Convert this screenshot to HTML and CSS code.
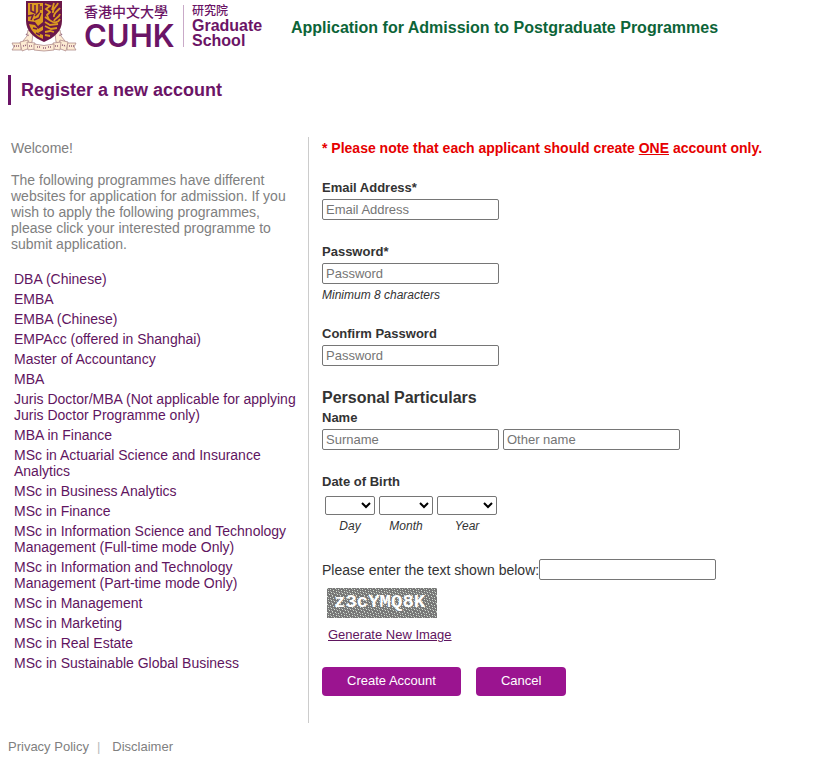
FILE: index.html
```html
<!DOCTYPE html>
<html lang="en">
<head>
<meta charset="utf-8">
<title>Application for Admission to Postgraduate Programmes</title>
<link rel="stylesheet" href="styles.css">
</head>
<body>
<header class="masthead">
  <div class="logo">
    <svg class="crest" viewBox="0 0 66 53" role="img" aria-label="University crest">
      <g fill="#fdebd3" stroke="#b08d8b" stroke-width="0.800">
        <path d="M17 30l5 3-1 9-5 2-4-3 4-5z"/>
        <path d="M49 30l-5 3 1 9 5 2 4-3-4-5z"/>
        <path d="M1 43h9v7H1l2-3z"/>
        <path d="M65 43h-9v7h9l-2-3z"/>
        <path d="M9 42l8-2 2 8-8 3z"/>
        <path d="M57 42l-8-2-2 8 8 3z"/>
        <path d="M16 42l8 1v6l-7 1z"/>
        <path d="M50 42l-8 1v6l7 1z"/>
        <path d="M23 44q10 3 20 0v6q-10 2-20 0z"/>
      </g>
      <path d="M15 34l3 2M51 34l-3 2M3 46h5M12 46l4-1M18 46h4M26 47h4M32 48h3M37 47h4M44 46h4M51 45l4 1M58 46h5" fill="none" stroke="#92617a" stroke-width="1.500" stroke-dasharray="1 1"/>
      <path d="M15 1h36v20c0 10-8 17-18 21C23 38 15 31 15 21z" fill="#6b1748"/>
      <path d="M17 3h15v19l-5 4-3-4-7-1z" fill="#dc9b20"/>
      <path d="M18 24l6 1 3 4 5-3v4l-5 3 5 2v4c-7-3-12-8-14-15z" fill="#dc9b20"/>
      <g fill="none" stroke="#6b1748" stroke-width="1.500">
        <path d="M20 4v7l4 2V5M28 4v8l-4 4M17 16l5-1-2 5M30 13l-2 5-5 2M30 6v4M22 28l4 1M25 33l4 2"/>
      </g>
      <g fill="none" stroke="#dc9b20" stroke-width="1.800">
        <path d="M34 4l5 2-4 3 4 3-3 3 2 5"/>
        <path d="M43 3l-2 7M47 3c-1 4-6 5-5 10M49 8c-2 3-7 5-6 9M49 14c-1 4-5 4-6 7M49 19c-2 4-6 4-9 2l-6-4"/>
        <path d="M34 22l5 3 8-1M46 28l-6 1-6-3M43 32l-4-1-5 1M39 36l-5-1"/>
      </g>
    </svg>
    <div class="university">
      <span class="university-zh" lang="zh-Hant">香港中文大學</span>
      <span class="university-en">CUHK</span>
    </div>
    <div class="school">
      <span class="school-zh" lang="zh-Hant">研究院</span>
      <span class="school-en">Graduate<br>School</span>
    </div>
  </div>
  <p class="site-title">Application for Admission to Postgraduate Programmes</p>
</header>

<h1 class="page-title">Register a new account</h1>

<main class="columns">
  <aside class="intro">
    <p>Welcome!</p>
    <p>The following programmes have different websites for application for admission. If you wish to apply the following programmes, please click your interested programme to submit application.</p>
    <ul class="programmes">
      <li><a href="#">DBA (Chinese)</a></li>
      <li><a href="#">EMBA</a></li>
      <li><a href="#">EMBA (Chinese)</a></li>
      <li><a href="#">EMPAcc (offered in Shanghai)</a></li>
      <li><a href="#">Master of Accountancy</a></li>
      <li><a href="#">MBA</a></li>
      <li><a href="#">Juris Doctor/MBA (Not applicable for applying Juris Doctor Programme only)</a></li>
      <li><a href="#">MBA in Finance</a></li>
      <li><a href="#">MSc in Actuarial Science and Insurance Analytics</a></li>
      <li><a href="#">MSc in Business Analytics</a></li>
      <li><a href="#">MSc in Finance</a></li>
      <li><a href="#">MSc in Information Science and Technology Management (Full-time mode Only)</a></li>
      <li><a href="#">MSc in Information and Technology Management (Part-time mode Only)</a></li>
      <li><a href="#">MSc in Management</a></li>
      <li><a href="#">MSc in Marketing</a></li>
      <li><a href="#">MSc in Real Estate</a></li>
      <li><a href="#">MSc in Sustainable Global Business</a></li>
    </ul>
  </aside>

  <form class="register">
    <p class="notice">* Please note that each applicant should create <u>ONE</u> account only.</p>

    <div class="field">
      <label for="email">Email Address*</label>
      <input id="email" type="email" placeholder="Email Address">
    </div>
    <div class="field">
      <label for="password">Password*</label>
      <input id="password" type="password" placeholder="Password">
      <small class="hint">Minimum 8 characters</small>
    </div>
    <div class="field">
      <label for="confirm">Confirm Password</label>
      <input id="confirm" type="password" placeholder="Password">
    </div>

    <h2 class="section-title">Personal Particulars</h2>
    <div class="field">
      <label for="surname">Name</label>
      <div class="names">
        <input id="surname" type="text" placeholder="Surname">
        <input type="text" placeholder="Other name" aria-label="Other name">
      </div>
    </div>

    <fieldset class="birth">
      <legend>Date of Birth</legend>
      <div class="dates">
        <div class="date"><select id="day" class="short"><option></option></select><label for="day">Day</label></div>
        <div class="date"><select id="month"><option></option></select><label for="month">Month</label></div>
        <div class="date"><select id="year" class="long"><option></option></select><label for="year">Year</label></div>
      </div>
    </fieldset>

    <div class="captcha">
      <label for="captcha">Please enter the text shown below:</label><input id="captcha" type="text">
    </div>
    <svg class="captcha-image" viewBox="0 0 110 30">
      <defs>
        <pattern id="grain" width="8" height="8" patternUnits="userSpaceOnUse">
          <rect width="8" height="8" fill="#777"/>
          <path d="M0 0h1v1h-1zM3 1h1v1h-1zM6 2h1v1h-1zM1 3h1v1h-1zM4 4h1v1h-1zM7 5h1v1h-1zM2 6h1v1h-1zM5 7h1v1h-1z" fill="#d5e2d5"/>
          <path d="M5 0h1v1h-1zM1 1h1v1h-1zM3 3h1v1h-1zM6 4h1v1h-1zM1 5h1v1h-1zM4 6h1v1h-1z" fill="#aaa"/>
        </pattern>
      </defs>
      <rect width="110" height="30" fill="url(#grain)"/>
      <text x="7" y="19">z3cYMQ8K</text>
    </svg>
    <a class="regenerate" href="#">Generate New Image</a>

    <div class="actions">
      <button type="submit">Create Account</button>
      <button type="button">Cancel</button>
    </div>
  </form>
</main>

<footer class="footer">
  <a href="#">Privacy Policy</a><span class="bar">|</span><a href="#">Disclaimer</a>
</footer>
</body>
</html>
```
FILE: styles.css
```css
* { box-sizing: border-box; }

body {
  margin: 0 8px;
  background: #fff;
  color: #333;
  font: 14px/16px "Liberation Sans", Arial, sans-serif;
}

p, h1, h2, ul { margin: 0; padding: 0; }
a { color: #5f155f; text-decoration: none; }

.masthead { display: flex; align-items: flex-start; }
.logo { display: flex; width: 283px; height: 55px; padding-left: 3px; color: #6b1466; }
.crest { width: 66px; height: 53px; }

.university {
  display: flex;
  flex-direction: column;
  width: 107px;
  height: 42px;
  margin-top: 5px;
  padding-left: 7px;
  border-right: 1px solid #c9aac8;
}
.university-zh { font: 500 14px/14px "Liberation Sans", "Noto Sans CJK TC", sans-serif; }
.university-en { font: 600 31px/34px "Inter", sans-serif; }

.school { display: flex; flex-direction: column; padding: 4px 0 0 8px; }
.school-zh { font: 500 12px/14px "Liberation Sans", "Noto Sans CJK TC", sans-serif; }
.school-en { font: bold 16px/15px "Liberation Sans", Arial, sans-serif; }

.site-title { margin-top: 18px; color: #0c6438; font-size: 16px; line-height: 20px; font-weight: bold; }

.page-title {
  margin-top: 20px;
  padding-left: 10px;
  border-left: 3px solid #6b1466;
  color: #6b1466;
  font-size: 18px;
  line-height: 30px;
}

.columns { display: grid; grid-template-columns: 301px 1fr; margin-top: 32px; }

.intro { padding: 3px 10px 50px 3px; border-right: 1px solid #ccc; color: #808080; }
.intro p { margin-bottom: 16px; }
.programmes { display: grid; gap: 4px; margin: 19px 0 0 3px; list-style: none; }

.register { padding: 3px 0 27px 13px; }
.notice { margin-bottom: 24px; color: #e60000; font-weight: bold; }

.field { display: flex; flex-direction: column; align-items: flex-start; margin-bottom: 24px; }
.field label, .birth legend { font-size: 13px; line-height: 16px; font-weight: bold; }
.field label { margin-bottom: 3px; }

input {
  width: 177px;
  height: 21px;
  padding: 0 3px;
  border: 1px solid #767676;
  border-radius: 2px;
  background: #fff;
  font: 13px/16px "Liberation Sans", Arial, sans-serif;
}
input::placeholder { color: #757575; }

.hint { margin-top: 4px; font-size: 12px; line-height: 14px; font-style: italic; }
.section-title { margin-top: -2px; margin-bottom: 2px; font-size: 16px; line-height: 20px; }
.names { display: flex; gap: 4px; }

.birth { min-width: 0; margin: 0; padding: 0; border: 0; }
.birth legend { padding: 0; }
.dates { display: flex; gap: 4px; padding: 6px 0 0 3px; }
.date { display: flex; flex-direction: column; align-items: center; }
.date label { margin-top: 4px; font-size: 12px; line-height: 14px; font-style: italic; }

select { width: 54px; height: 19px; border: 1px solid #767676; border-radius: 2px; background-color: #fff; font: 13px "Liberation Sans", Arial, sans-serif; }
select.short { width: 50px; }
select.long { width: 60px; }

.captcha { display: flex; align-items: center; margin-top: 26px; }
.captcha-image { display: block; width: 110px; height: 30px; margin: 8px 0 8px 5px; }
.captcha-image text { fill: #fff; font: bold 19px "Liberation Mono", monospace; }
.regenerate { margin-left: 6px; font-size: 13px; text-decoration: underline; }

.actions { display: flex; gap: 15px; margin-top: 24px; }
button {
  padding: 6px 25px 7px;
  border: 0;
  border-radius: 4px;
  background: #9b1490;
  color: #fff;
  font: 13px/16px "Liberation Sans", Arial, sans-serif;
}

.footer { display: flex; margin-top: 16px; font-size: 13px; color: #808080; }
.footer a { color: #808080; }
.bar { padding: 0 12px 0 8px; color: #bbb; }
```
